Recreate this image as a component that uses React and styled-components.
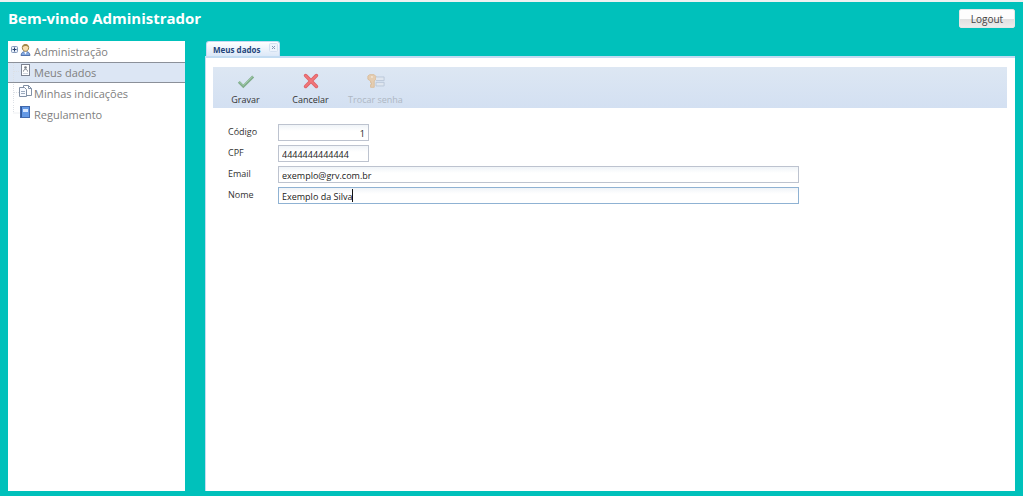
import { useState } from "react";
import styled, { createGlobalStyle } from "styled-components";

const GlobalStyle = createGlobalStyle`
  * {
    box-sizing: border-box;
  }

  body {
    margin: 0;
    background: #00c1bb;
    font-family: "Open Sans", "Noto Sans", sans-serif;
  }

  button,
  input {
    font-family: inherit;
  }
`;

const Page = styled.div`
  display: flex;
  flex-direction: column;
  min-height: 100vh;
  padding: 0 8px 5px;
  border-top: 2px solid #eef1f1;
`;

const Header = styled.header`
  display: flex;
  justify-content: space-between;
  align-items: flex-start;
  height: 39px;
  padding-top: 7px;
`;

const Title = styled.h1`
  margin: 0;
  color: #fff;
  font-size: 15px;
  font-weight: 700;
  line-height: 18px;
`;

const LogoutButton = styled.button`
  width: 56px;
  height: 19px;
  padding: 0;
  border: 1px solid #e6e6e6;
  border-radius: 2px;
  background: linear-gradient(#fdfdfd 50%, #dedede 50%, #ececec);
  color: #444;
  font-size: 10px;
  line-height: 16px;
`;

const Body = styled.div`
  display: flex;
  flex: 1;
  gap: 20px;
`;

const Sidebar = styled.nav`
  flex: 0 0 177px;
  background: #fff;
`;

const Tree = styled.ul`
  margin: 0;
  padding: 0;
  list-style: none;
`;

const TreeLink = styled.a`
  display: flex;
  align-items: flex-start;
  height: 21px;
  border: solid ${(props) => (props.$active ? "#8b9099" : "transparent")};
  border-width: 1px 0;
  background: ${(props) => (props.$active ? "#dce6f4" : "transparent")};
  color: #808080;
  font-size: 11px;
  line-height: 20px;
  text-decoration: none;

  svg {
    flex: none;
  }
`;

const Main = styled.main`
  display: flex;
  flex: 1;
  flex-direction: column;
  min-width: 0;
`;

const Tab = styled.div`
  display: flex;
  align-self: flex-start;
  justify-content: space-between;
  width: 74px;
  height: 15px;
  margin-left: 1px;
  padding: 0 1px 0 6px;
  border: 1px solid #c6daf3;
  border-bottom: 0;
  border-radius: 3px 3px 0 0;
  background: linear-gradient(#fff, #dce8f8);
`;

const TabTitle = styled.span`
  color: #24457c;
  font-size: 8px;
  font-weight: 700;
  line-height: 15px;
`;

const CloseButton = styled.button`
  display: flex;
  width: 9px;
  height: 10px;
  padding: 0;
  border: 0;
  background: none;
`;

const Panel = styled.section`
  flex: 1;
  padding: 9px 8px 0 7px;
  border: 1px solid #c3dcf2;
  border-width: 2px 0 0 1px;
  background: #fff;
`;

const Toolbar = styled.div`
  display: flex;
  height: 41px;
  background: linear-gradient(#dde7f3, #d3e0f2);
`;

const ToolButton = styled.button`
  display: flex;
  flex-direction: column;
  align-items: center;
  width: 65px;
  padding: 5px 0 0;
  border: 0;
  background: none;
  color: #333;
  font-size: 9px;
  line-height: 16px;

  &:disabled {
    color: #aeb7c3;
  }

  svg {
    display: block;
    margin-bottom: 2px;
  }
`;

const Form = styled.form`
  display: flex;
  flex-direction: column;
  gap: 4px;
  padding: 16px 0 0 15px;
`;

const Field = styled.div`
  display: flex;
  height: 17px;
`;

const Label = styled.label`
  flex: 0 0 50px;
  color: #333;
  font-size: 9px;
  line-height: 16px;
`;

const InputBox = styled.div`
  position: relative;
  flex: 0 1 ${(props) => (props.$short ? "91px" : "521px")};
  min-width: 0;
`;

const Input = styled.input`
  display: block;
  width: 100%;
  height: 17px;
  padding: 1px 3px 0;
  border: 1px solid ${(props) => (props.$current ? "#8fb2d3" : "#bdc3cf")};
  border-radius: 0;
  outline: 0;
  background: linear-gradient(#f0f4f8, #fff 6px);
  color: #222;
  caret-color: transparent;
  font-size: 9px;
  line-height: 14px;
  text-align: ${(props) => (props.$numeric ? "right" : "left")};
`;

const Caret = styled.span`
  position: absolute;
  top: 2px;
  left: 4px;
  height: 13px;
  border-right: 1px solid #111;
  color: transparent;
  font-size: 9px;
  line-height: 13px;
  white-space: pre;
  pointer-events: none;
`;

function UserIcon() {
  return (
    <>
      <path d="M13 12.500c.3-3 2-4 4.500-4s4.200 1 4.500 4z" fill="#84a8df" stroke="#5273ad" />
      <path d="m16 8.500 1.500 3 1.500-3z" fill="#fff" />
      <path d="M14.300 4.500c0-4 6.400-4 6.400 0 0 5-6.400 5-6.400 0z" fill="#f8deb0" stroke="#a08145" />
      <path d="M14.300 4.500c-.3-4.800 6.700-4.800 6.400 0-1.500-2-4.500-2-6.400 0z" fill="#a38748" />
    </>
  );
}

function BadgeIcon() {
  return (
    <>
      <rect x="13.500" y=".5" width="8" height="11" fill="#fff" stroke="#7c8290" />
      <circle cx="17.500" cy="3.500" r="1.300" fill="#777d86" />
      <path d="M15.500 7.500c0-3 4-3 4 0" fill="none" stroke="#777d86" />
      <path d="M15 9.500h5" stroke="#ced3dc" />
    </>
  );
}

function PagesIcon() {
  return (
    <>
      <path d="M15.500.5h5l3 3v7h-8z" fill="#fff" stroke="#8190a5" />
      <path d="M20.500.5v3h3" fill="none" stroke="#8190a5" />
      <path d="M11.500 2.500h5l2 2v7h-7z" fill="#f7faff" stroke="#8190a5" />
      <path d="M13 6.500h4M13 8.500h4" stroke="#9dacbf" />
    </>
  );
}

function BookIcon() {
  return (
    <>
      <rect x="12.500" y=".5" width="9" height="11" fill="#6499e5" stroke="#4169ad" />
      <path d="M13.500 1v10" stroke="#315b9f" />
      <rect x="15" y="3" width="5" height="3" fill="#d9e8ff" />
    </>
  );
}

const treeItems = [
  { label: "Administração", Icon: UserIcon, expandable: true },
  { label: "Meus dados", Icon: BadgeIcon },
  { label: "Minhas indicações", Icon: PagesIcon },
  { label: "Regulamento", Icon: BookIcon, last: true },
];

function TreeItem({ item, active, onSelect }) {
  const { label, Icon, expandable, last } = item;

  return (
    <li>
      <TreeLink
        href="#"
        $active={active}
        aria-current={active ? "page" : undefined}
        onClick={(event) => {
          event.preventDefault();
          onSelect(label);
        }}
      >
        <svg width="26" height="19" viewBox="0 0 26 19" aria-hidden="true">
          {expandable ? (
            <>
              <rect x="3.500" y="4.500" width="6" height="6" rx="1" fill="#e7effa" stroke="#8499bb" />
              <path d="M4.500 7.500h4M6.500 5.500v4" stroke="#263e6c" />
            </>
          ) : (
            <path d={last ? "M5.500 0v8H12" : "M5.500 0v19M6 8.500h5"} fill="none" stroke="#dce0e6" strokeDasharray="1 1" />
          )}
          <g transform="translate(0 1)">
            <Icon />
          </g>
        </svg>
        {label}
      </TreeLink>
    </li>
  );
}

function CheckIcon() {
  return (
    <svg width="20" height="20" viewBox="0 0 20 20" fill="none" aria-hidden="true">
      <path d="m2 11 5 5L18 5" stroke="#7fac8b" strokeWidth="3" />
      <path d="m2.500 11 4.500 4L17.500 5" stroke="#a5cfaa" />
    </svg>
  );
}

function CancelIcon() {
  return (
    <svg width="20" height="20" viewBox="0 0 20 20" fill="none" strokeLinecap="round" aria-hidden="true">
      <path d="m4 4 12 12M16 4 4 16" stroke="#df6268" strokeWidth="4" />
      <path d="m4 4 12 12M16 4 4 16" stroke="#f1777a" strokeWidth="2" />
    </svg>
  );
}

function KeyIcon() {
  return (
    <svg width="20" height="20" viewBox="0 0 20 20" fill="none" aria-hidden="true">
      <path d="M1 4.500 3 3h5l2 2v3L8 10v7H4v-3h1v-2H4v-2L1 8z" fill="#e5cdb1" stroke="#d9bc9a" />
      <circle cx="5.500" cy="5.500" r="1" fill="#f4eadb" />
      <path d="M10 5.500h9v4h-9M10 11.500h9v4h-9z" fill="#dfe6ef" stroke="#b9c6d8" />
    </svg>
  );
}

const fields = [
  { name: "codigo", label: "Código", short: true, numeric: true },
  { name: "cpf", label: "CPF", short: true },
  { name: "email", label: "Email" },
  { name: "nome", label: "Nome" },
];

function App() {
  const [page, setPage] = useState("Meus dados");
  const [current, setCurrent] = useState("nome");
  const [values, setValues] = useState({
    codigo: "1",
    cpf: "4444444444444",
    email: "exemplo@grv.com.br",
    nome: "Exemplo da Silva",
  });

  return (
    <>
      <GlobalStyle />
      <Page>
        <Header>
          <Title>Bem-vindo Administrador</Title>
          <LogoutButton type="button">Logout</LogoutButton>
        </Header>
        <Body>
          <Sidebar>
            <Tree>
              {treeItems.map((item) => (
                <TreeItem key={item.label} item={item} active={item.label === page} onSelect={setPage} />
              ))}
            </Tree>
          </Sidebar>
          <Main>
            <Tab>
              <TabTitle>Meus dados</TabTitle>
              <CloseButton type="button" aria-label="Fechar">
                <svg width="9" height="10" viewBox="0 0 9 10">
                  <rect x=".5" y="1.500" width="8" height="8" rx="1" fill="#edf4fd" stroke="#d3e0f1" />
                  <path d="m3 4 3 3M6 4 3 7" stroke="#8598b5" />
                </svg>
              </CloseButton>
            </Tab>
            <Panel>
              <Toolbar>
                <ToolButton type="submit" form="dados">
                  <CheckIcon />
                  Gravar
                </ToolButton>
                <ToolButton type="button">
                  <CancelIcon />
                  Cancelar
                </ToolButton>
                <ToolButton type="button" disabled>
                  <KeyIcon />
                  Trocar senha
                </ToolButton>
              </Toolbar>
              <Form id="dados" onSubmit={(event) => event.preventDefault()}>
                {fields.map(({ name, label, short, numeric }) => (
                  <Field key={name}>
                    <Label htmlFor={name}>{label}</Label>
                    <InputBox $short={short}>
                      <Input
                        id={name}
                        name={name}
                        value={values[name]}
                        $numeric={numeric}
                        $current={name === current}
                        onFocus={() => setCurrent(name)}
                        onChange={(event) => setValues({ ...values, [name]: event.target.value })}
                      />
                      {name === current && !numeric && <Caret aria-hidden="true">{values[name]}</Caret>}
                    </InputBox>
                  </Field>
                ))}
              </Form>
            </Panel>
          </Main>
        </Body>
      </Page>
    </>
  );
}

export default App;
